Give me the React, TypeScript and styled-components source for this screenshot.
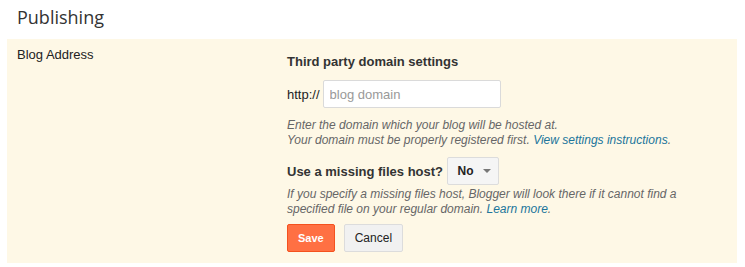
import React from "react";
import styled, { createGlobalStyle } from "styled-components";

const Global = createGlobalStyle`
  html, body { margin: 0; padding: 0; background: #fff; }
  body { font-family: Arial, "Liberation Sans", sans-serif; color: #222; }
`;

const Page = styled.div`
  width: 745px;
  height: 267px;
  overflow: hidden;
`;

const Title = styled.h1`
  margin: 0;
  padding: 3px 0 0 17px;
  height: 39px;
  box-sizing: border-box;
  font-family: "Open Sans", sans-serif;
  font-weight: 400;
  font-size: 18px;
  line-height: 28px;
  color: #333;
`;

const Panel = styled.section`
  margin: 0 8px 0 7px;
  height: 224px;
  box-sizing: border-box;
  background: #fef8e6;
  padding: 8px 10px 0 10px;
  display: grid;
  grid-template-columns: 270px 1fr;
`;

const Label = styled.div`
  font-size: 13px;
  line-height: 16px;
  color: #222;
`;

const Column = styled.div`
  display: flex;
  flex-direction: column;
  padding-top: 7px;
`;

const Heading = styled.div`
  font-size: 13px;
  font-weight: bold;
  line-height: 16px;
  color: #333;
`;

const Row = styled.div<{ $mt: number }>`
  display: flex;
  align-items: center;
  gap: 3px;
  margin-top: ${(p) => p.$mt}px;
`;

const Prefix = styled.span`
  font-size: 13px;
  color: #222;
`;

const Input = styled.input`
  width: 178px;
  height: 28px;
  box-sizing: border-box;
  border: 1px solid #dadada;
  border-radius: 2px;
  background: #fff;
  padding: 0 6px;
  font-family: Arial, "Liberation Sans", sans-serif;
  font-size: 13px;
  outline: none;
  &::placeholder { color: #999; }
`;

const Help = styled.div<{ $mt: number }>`
  margin-top: ${(p) => p.$mt}px;
  font-size: 12px;
  font-style: italic;
  line-height: 15px;
  color: #666;
`;

const Link = styled.a`
  color: #21759b;
  text-decoration: none;
`;

const Question = styled.span`
  font-size: 13px;
  font-weight: bold;
  color: #333;
`;

const Select = styled.button`
  margin-left: 1px;
  width: 52px;
  height: 28px;
  box-sizing: border-box;
  border: 1px solid #dcdcdc;
  border-radius: 2px;
  background: #f5f5f5;
  display: flex;
  align-items: center;
  justify-content: center;
  gap: 9px;
  padding: 0 0 0 2px;
  font-family: Arial, "Liberation Sans", sans-serif;
  font-size: 12px;
  font-weight: bold;
  color: #222;
`;

const Caret = styled.span`
  width: 0;
  height: 0;
  border-left: 4px solid transparent;
  border-right: 4px solid transparent;
  border-top: 4px solid #777;
`;

const Buttons = styled.div`
  display: flex;
  gap: 9px;
  margin-top: 7px;
`;

const Button = styled.button<{ $primary?: boolean }>`
  height: 28px;
  box-sizing: border-box;
  border-radius: 2px;
  padding: 0 10px;
  font-family: Arial, "Liberation Sans", sans-serif;
  font-size: ${(p) => (p.$primary ? 11 : 12)}px;
  font-weight: ${(p) => (p.$primary ? "bold" : "normal")};
  border: 1px solid ${(p) => (p.$primary ? "#f4511e" : "#dcdcdc")};
  background: ${(p) => (p.$primary ? "#ff7043" : "#f1f1f1")};
  color: ${(p) => (p.$primary ? "#fff" : "#222")};
`;

export default function App() {
  return (
    <Page>
      <Global />
      <Title>Publishing</Title>
      <Panel>
        <Label>Blog Address</Label>
        <Column>
          <Heading>Third party domain settings</Heading>
          <Row $mt={10}>
            <Prefix>http://</Prefix>
            <Input placeholder="blog domain" />
          </Row>
          <Help $mt={10}>
            Enter the domain which your blog will be hosted at.
            <br />
            Your domain must be properly registered first.{" "}
            <Link href="#">View settings instructions</Link>.
          </Help>
          <Row $mt={9}>
            <Question>Use a missing files host?</Question>
            <Select>
              No <Caret />
            </Select>
          </Row>
          <Help $mt={2}>
            If you specify a missing files host, Blogger will look there if it cannot find a
            <br />
            specified file on your regular domain. <Link href="#">Learn more</Link>.
          </Help>
          <Buttons>
            <Button $primary>Save</Button>
            <Button>Cancel</Button>
          </Buttons>
        </Column>
      </Panel>
    </Page>
  );
}
